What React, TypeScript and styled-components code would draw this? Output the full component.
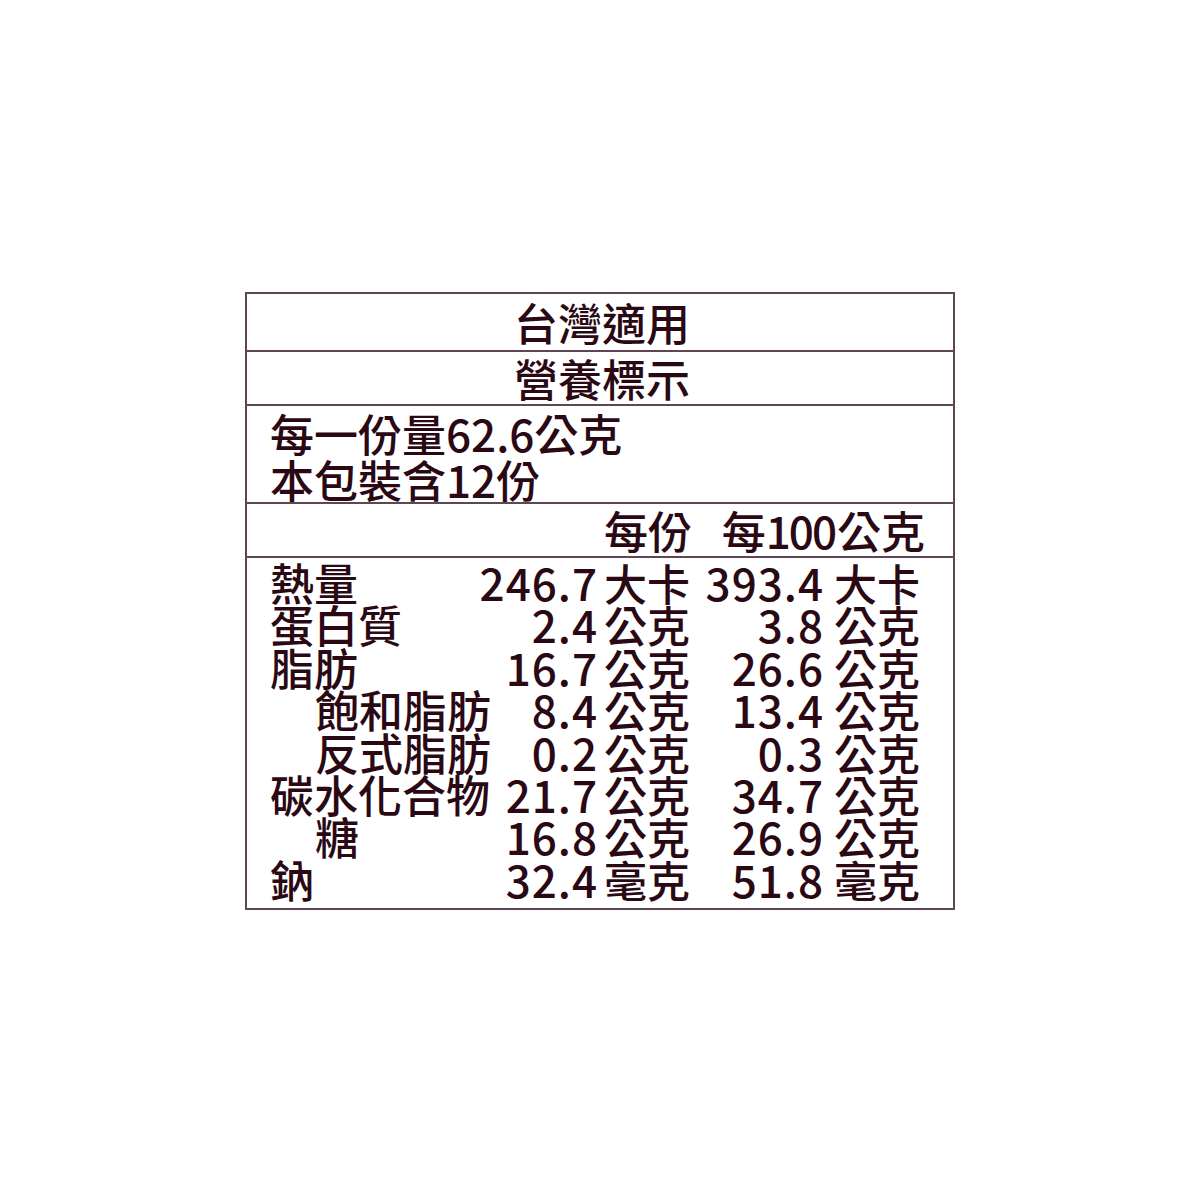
import React from 'react';
import styled, { createGlobalStyle } from 'styled-components';

const GlobalStyle = createGlobalStyle`
  html, body {
    margin: 0;
    padding: 0;
    background: #ffffff;
  }
  body {
    font-family: "Noto Sans CJK TC", "Noto Sans", sans-serif;
    color: #2a0914;
  }
`;

type Item = {
  name: string;
  indent?: boolean;
  per: string;
  perUnit: string;
  per100: string;
  per100Unit: string;
};

const items: Item[] = [
  { name: '熱量', per: '246.7', perUnit: '大卡', per100: '393.4', per100Unit: '大卡' },
  { name: '蛋白質', per: '2.4', perUnit: '公克', per100: '3.8', per100Unit: '公克' },
  { name: '脂肪', per: '16.7', perUnit: '公克', per100: '26.6', per100Unit: '公克' },
  { name: '飽和脂肪', indent: true, per: '8.4', perUnit: '公克', per100: '13.4', per100Unit: '公克' },
  { name: '反式脂肪', indent: true, per: '0.2', perUnit: '公克', per100: '0.3', per100Unit: '公克' },
  { name: '碳水化合物', per: '21.7', perUnit: '公克', per100: '34.7', per100Unit: '公克' },
  { name: '糖', indent: true, per: '16.8', perUnit: '公克', per100: '26.9', per100Unit: '公克' },
  { name: '鈉', per: '32.4', perUnit: '毫克', per100: '51.8', per100Unit: '毫克' },
];

const App: React.FC = () => {
  return (
    <Page>
      <GlobalStyle />
      <Label>
        <TitleRow height={56}>台灣適用</TitleRow>
        <TitleRow height={52}>營養標示</TitleRow>
        <ServingRow>
          <Line>每一份量62.6公克</Line>
          <Line>本包裝含12份</Line>
        </ServingRow>
        <HeaderRow>
          <HeadCell>每份</HeadCell>
          <HeadCell wide>
            每<Digits>100</Digits>公克
          </HeadCell>
        </HeaderRow>
        <Body>
          {items.map((it) => (
            <DataRow key={it.name}>
              <Name indent={it.indent}>{it.name}</Name>
              <Num>{it.per}</Num>
              <Unit>{it.perUnit}</Unit>
              <Num>{it.per100}</Num>
              <Unit>{it.per100Unit}</Unit>
            </DataRow>
          ))}
        </Body>
      </Label>
    </Page>
  );
};

export default App;

const Page = styled.div`
  width: 1200px;
  height: 1200px;
  padding-top: 292px;
  box-sizing: border-box;
  display: flex;
  justify-content: center;
  align-items: flex-start;
`;

const Label = styled.div`
  width: 710px;
  box-sizing: border-box;
  border: 2px solid #5e4654;
  display: flex;
  flex-direction: column;
  font-size: 44px;
  font-weight: 500;
`;

const TitleRow = styled.div<{ height: number }>`
  height: ${(p) => p.height}px;
  display: flex;
  align-items: center;
  justify-content: center;
  line-height: 1;
  padding-left: 4px;
  & + & {
    border-top: 2px solid #5e4654;
  }
`;

const ServingRow = styled.div`
  border-top: 2px solid #5e4654;
  padding: 4px 0 0 23px;
  height: 92px;
  display: flex;
  flex-direction: column;
`;

const Line = styled.div`
  line-height: 46px;
  white-space: nowrap;
`;

const HeaderRow = styled.div`
  border-top: 2px solid #5e4654;
  height: 52px;
  display: grid;
  grid-template-columns: minmax(0, 1fr) 230px;
  align-items: center;
  padding: 0 28px 0 23px;
  line-height: 1;
`;

const HeadCell = styled.div<{ wide?: boolean }>`
  text-align: right;
  white-space: nowrap;
  padding-right: ${(p) => (p.wide ? '0' : '3px')};
`;

const Digits = styled.span`
  letter-spacing: -2px;
  margin-right: 2px;
`;

const Body = styled.div`
  border-top: 2px solid #5e4654;
  padding: 3px 33px 8px 23px;
  display: flex;
  flex-direction: column;
`;

const DataRow = styled.div`
  display: grid;
  grid-template-columns: minmax(0, 1fr) 120px 93px 133px 97px;
  line-height: 42.4px;
  height: 42.4px;
  white-space: nowrap;
`;

const Name = styled.div<{ indent?: boolean }>`
  padding-left: ${(p) => (p.indent ? '45px' : '0')};
`;

const Num = styled.div`
  text-align: right;
  letter-spacing: 1px;
  margin-right: -1px;
`;

const Unit = styled.div`
  text-align: right;
  font-size: 43px;
`;
